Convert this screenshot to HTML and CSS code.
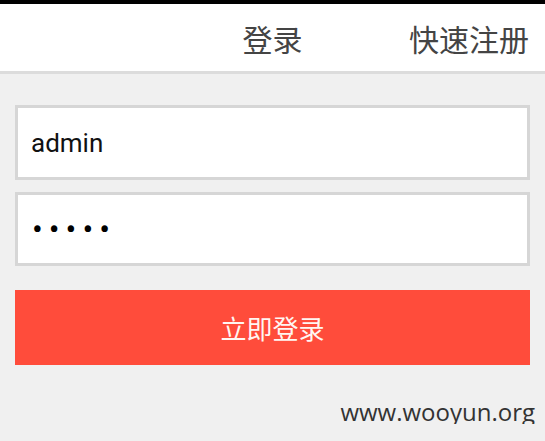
FILE: index.html
```html
<!DOCTYPE html>
<html lang="zh-CN">
<head>
<meta charset="utf-8">
<title>登录</title>
<link rel="stylesheet" href="styles.css">
</head>
<body>
<div class="statusbar"></div>
<header class="header">
  <span class="spacer"></span>
  <span class="title">登录</span>
  <a class="register">快速注册</a>
</header>
<form class="form">
  <input class="field" type="text" value="admin">
  <input class="field pwd" type="password" value="12345">
  <button class="submit" type="button">立即登录</button>
</form>
<div class="watermark">www.wooyun.org</div>
</body>
</html>
```
FILE: styles.css
```css
html, body {
  margin: 0;
  padding: 0;
  background: #f0f0f0;
  font-family: Roboto, "Noto Sans CJK SC", sans-serif;
}
.statusbar {
  height: 4px;
  background: #000;
}
.header {
  height: 67px;
  background: #fff;
  border-bottom: 3px solid #dcdcdc;
  display: grid;
  grid-template-columns: 1fr auto 1fr;
  align-items: center;
  padding: 0 16px 0 16px;
  font-family: "Noto Sans CJK SC", sans-serif;
  font-size: 30px;
  color: #444;
}
.title {
  line-height: 1;
  margin-top: 1px;
}
.register {
  justify-self: end;
  line-height: 1;
  margin-top: 1px;
}
.form {
  display: flex;
  flex-direction: column;
  padding: 31px 15px 0 15px;
}
.field {
  box-sizing: border-box;
  height: 75px;
  margin: 0 0 12px 0;
  border: 3px solid #d6d6d6;
  background: #fff;
  outline: none;
  padding: 0 0 0 13px;
  font-family: Roboto, sans-serif;
  font-size: 26px;
  color: #111;
  width: 100%;
}
.pwd {
  height: 74px;
  letter-spacing: 6px;
  font-size: 32px;
  padding-left: 14px;
  color: #000;
}
.submit {
  margin-top: 12px;
  height: 75px;
  border: none;
  background: #ff4c3b;
  color: #fff6f2;
  font-family: "Noto Sans CJK SC", sans-serif;
  font-size: 26px;
  padding: 0;
  width: 100%;
}
.watermark {
  text-align: right;
  padding: 35px 10px 0 0;
  font-family: "Open Sans", sans-serif;
  font-size: 24px;
  color: #333;
  line-height: 1;
}
```
